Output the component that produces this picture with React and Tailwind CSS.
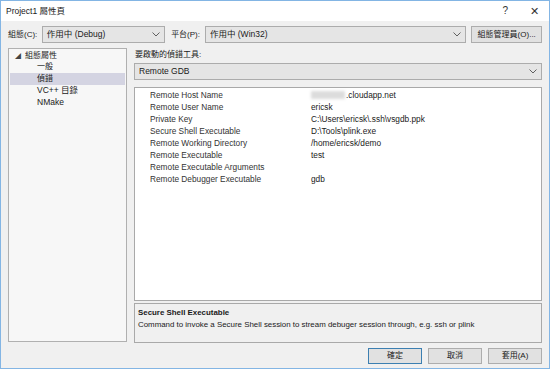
import React from "react";

const F = { fontFamily: '"Liberation Sans", "Noto Sans CJK TC", sans-serif' };

function Chevron() {
  return (
    <svg width="8" height="5" viewBox="0 0 8 5" className="shrink-0">
      <path d="M0.5 0.5 L4 4 L7.5 0.5" fill="none" stroke="#606060" strokeWidth="1" />
    </svg>
  );
}

function Select({ text, className }) {
  return (
    <div className={"flex items-center justify-between h-[17px] border border-[#acacac] bg-[#e5e5e5] pl-[4px] pr-[4px] " + className}>
      <span className="text-[8.5px] text-[#1a1a1a] leading-none">{text}</span>
      <Chevron />
    </div>
  );
}

const rows = [
  ["Remote Host Name", ".cloudapp.net", true],
  ["Remote User Name", "ericsk"],
  ["Private Key", "C:\\Users\\ericsk\\.ssh\\vsgdb.ppk"],
  ["Secure Shell Executable", "D:\\Tools\\plink.exe"],
  ["Remote Working Directory", "/home/ericsk/demo"],
  ["Remote Executable", "test"],
  ["Remote Executable Arguments", ""],
  ["Remote Debugger Executable", "gdb"],
];

export default function App() {
  return (
    <div style={F} className="w-[550px] h-[369px] border border-[#83b5e4] flex flex-col bg-[#f0f0f0] text-[#1a1a1a] overflow-hidden">
      <div className="h-[20px] bg-white flex items-center justify-between pl-[5px] pr-[10px] shrink-0">
        <span className="text-[8.5px] leading-none">Project1 屬性頁</span>
        <div className="flex items-center gap-[22px] text-[10px] leading-none text-[#333]">
          <span>?</span>
          <span className="text-[11px]">✕</span>
        </div>
      </div>
      <div className="flex-1 flex flex-col px-[7px]">
        <div className="mt-[5px] h-[17px] flex items-center">
          <span className="text-[8px] w-[34px] leading-none">組態(C):</span>
          <Select text="作用中 (Debug)" className="w-[124px]" />
          <span className="text-[8px] ml-[6px] w-[34px] leading-none">平台(P):</span>
          <Select text="作用中 (Win32)" className="w-[263px]" />
          <div className="ml-[5px] w-[71px] h-[17px] border border-[#adadad] bg-[#e1e1e1] flex items-center justify-center text-[8px] leading-none">組態管理員(O)...</div>
        </div>
        <div className="mt-[5px] flex">
          <div className="w-[119px] h-[294px] border border-[#b0b0b0] bg-[#f7f7f7] p-[1px] shrink-0">
            <div className="flex flex-col text-[8px] leading-none">
              <div className="h-[11.5px] flex items-center pl-[5px]">
                <span className="text-[6px] mr-[4px] text-[#444]">◢</span>
                <span>組態屬性</span>
              </div>
              <div className="h-[11.5px] flex items-center pl-[27px]">一般</div>
              <div className="h-[11.5px] flex items-center pl-[27px] bg-[#d4d4e2]">偵錯</div>
              <div className="h-[11.5px] flex items-center pl-[27px] text-[8.5px]">VC++ 目錄</div>
              <div className="h-[11.5px] flex items-center pl-[27px] text-[8.5px]">NMake</div>
            </div>
          </div>
          <div className="flex-1 ml-[7px] flex flex-col">
            <div className="h-[14px] flex items-center text-[8px] leading-none pl-[1px]">要啟動的偵錯工具:</div>
            <Select text="Remote GDB" className="mt-[1px] w-full" />
            <div className="mt-[7px] h-[214px] border border-[#a9a9a9] bg-white flex flex-col pt-[1px]">
              {rows.map(([k, v, blur]) => (
                <div key={k} className="h-[12px] flex items-center text-[8.3px] leading-none">
                  <div className="w-[15px] shrink-0" />
                  <div className="w-[161px] shrink-0 text-[#333]">{k}</div>
                  <div className="flex-1 flex items-center h-full">
                    {blur && <span className="inline-block w-[34px] h-[8px] bg-[#dcdcdc] blur-[1.5px] mr-[1px]" />}
                    <span>{v}</span>
                  </div>
                </div>
              ))}
            </div>
            <div className="mt-[2px] h-[40px] border border-[#a9a9a9] bg-[#f0f0f0] px-[3px] pt-[3px] text-[7.9px] leading-[12px]">
              <div className="font-bold">Secure Shell Executable</div>
              <div>Command to invoke a Secure Shell session to stream debuger session through, e.g. ssh or plink</div>
            </div>
          </div>
        </div>
        <div className="mt-[5px] flex justify-end gap-[6px]">
          <div className="w-[54px] h-[16px] border border-[#3c7fb1] bg-[#e1e1e1] flex items-center justify-center text-[8px] leading-none">確定</div>
          <div className="w-[54px] h-[16px] border border-[#adadad] bg-[#e1e1e1] flex items-center justify-center text-[8px] leading-none">取消</div>
          <div className="w-[54px] h-[16px] border border-[#adadad] bg-[#e1e1e1] flex items-center justify-center text-[8px] leading-none">套用(A)</div>
        </div>
      </div>
    </div>
  );
}
